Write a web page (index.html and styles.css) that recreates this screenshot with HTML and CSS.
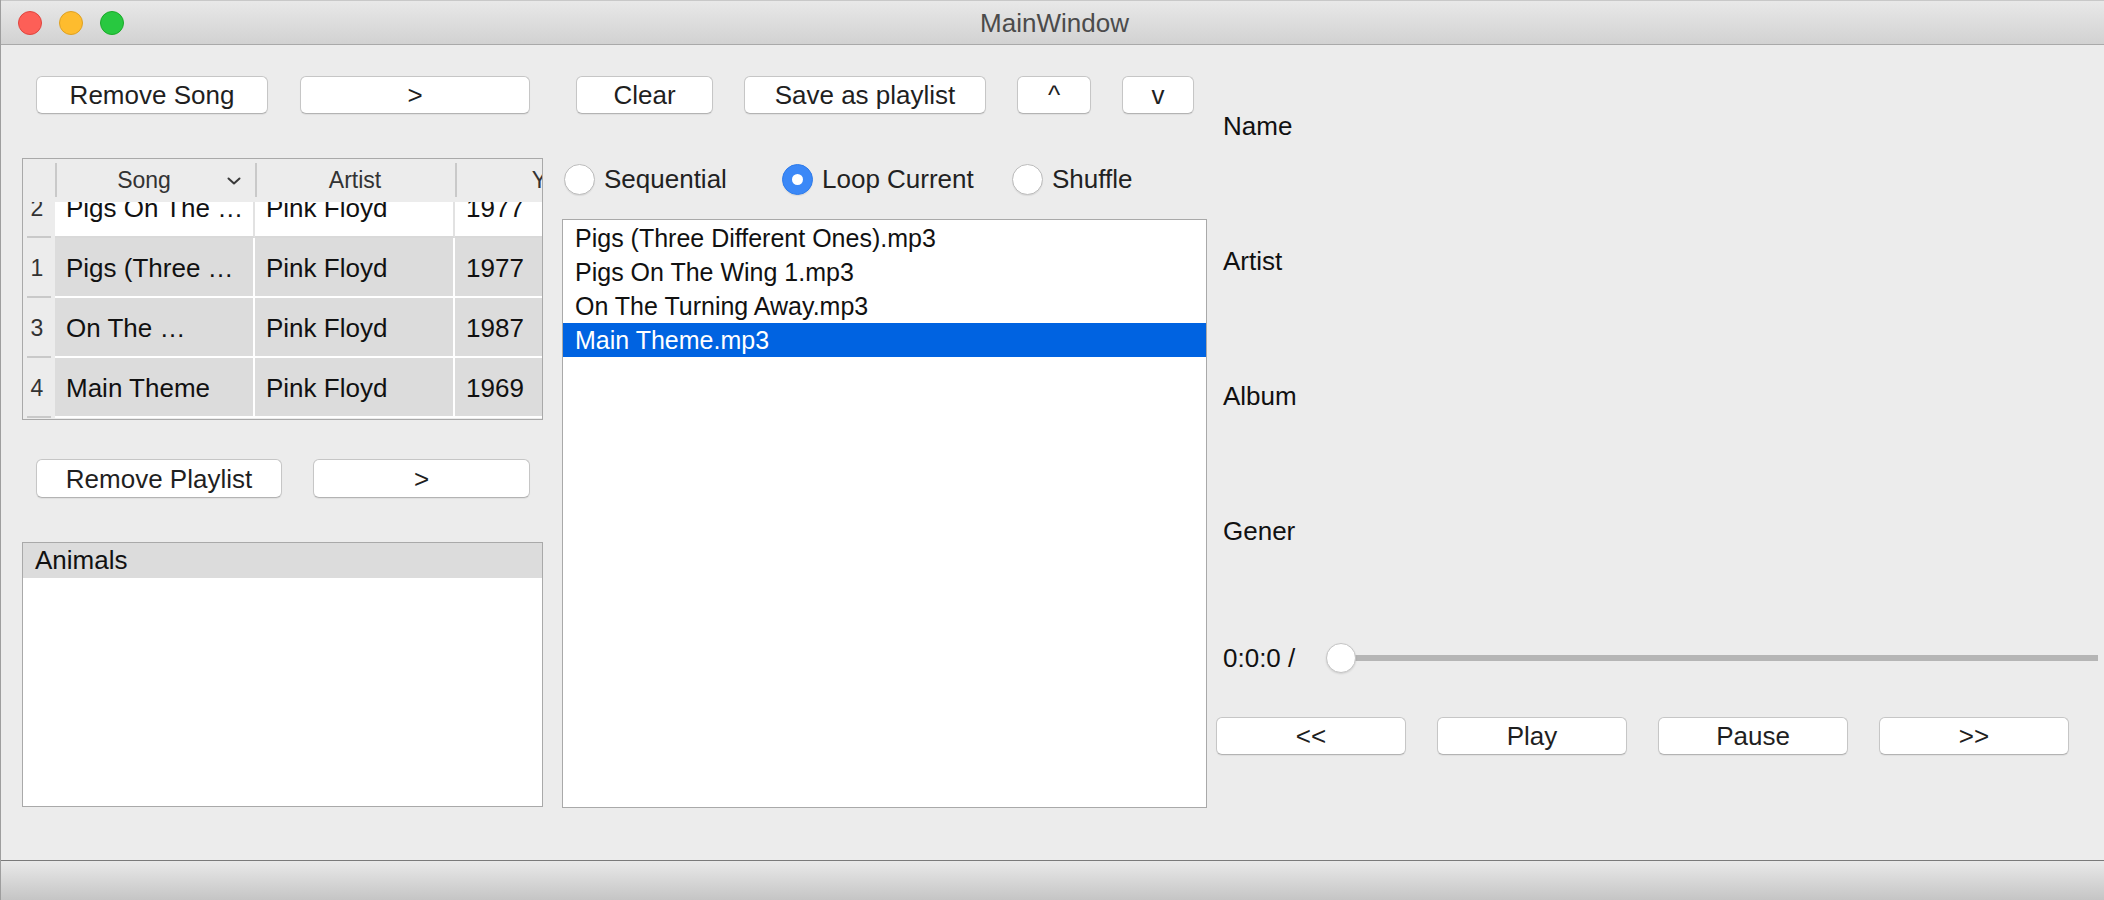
FILE: index.html
```html
<!DOCTYPE html>
<html lang="en">
<head>
<meta charset="utf-8">
<title>MainWindow</title>
<link rel="stylesheet" href="styles.css">
</head>
<body>
<div class="window">
  <header class="titlebar">
    <div class="lights">
      <span class="light red"></span>
      <span class="light yellow"></span>
      <span class="light green"></span>
    </div>
    <div class="title">MainWindow</div>
    <div class="title-spacer"></div>
  </header>

  <main class="content">
    <section class="col-left">
      <div class="btn-row top-row">
        <button class="btn w-remove-song">Remove Song</button>
        <button class="btn w-add-song">&gt;</button>
      </div>

      <div class="table">
        <div class="thead">
          <div class="th th-num"></div>
          <div class="th th-col th-song"><span class="th-label">Song</span><svg class="chev" width="14" height="8" viewBox="0 0 14 8"><polyline points="1.5,1.5 7,6.5 12.5,1.5" fill="none" stroke="#3a3a3a" stroke-width="2" stroke-linecap="round" stroke-linejoin="round"/></svg></div>
          <div class="th th-col"><span class="th-label">Artist</span></div>
          <div class="th th-col"><span class="th-label">Year</span></div>
        </div>
        <div class="tbody">
          <div class="tscroll">
            <div class="tr tr-white">
              <div class="td-num">2</div>
              <div class="td">Pigs On The …</div>
              <div class="td">Pink Floyd</div>
              <div class="td">1977</div>
            </div>
            <div class="tr">
              <div class="td-num">1</div>
              <div class="td">Pigs (Three …</div>
              <div class="td">Pink Floyd</div>
              <div class="td">1977</div>
            </div>
            <div class="tr">
              <div class="td-num">3</div>
              <div class="td">On The …</div>
              <div class="td">Pink Floyd</div>
              <div class="td">1987</div>
            </div>
            <div class="tr">
              <div class="td-num">4</div>
              <div class="td">Main Theme</div>
              <div class="td">Pink Floyd</div>
              <div class="td">1969</div>
            </div>
          </div>
        </div>
      </div>

      <div class="btn-row playlist-row">
        <button class="btn w-remove-pl">Remove Playlist</button>
        <button class="btn w-add-pl">&gt;</button>
      </div>

      <div class="listbox playlists">
        <div class="li li-inactive">Animals</div>
      </div>
    </section>

    <section class="col-mid">
      <div class="btn-row top-row">
        <button class="btn w-clear">Clear</button>
        <button class="btn w-save">Save as playlist</button>
        <button class="btn w-up">^</button>
        <button class="btn w-down">v</button>
      </div>

      <div class="radios">
        <label class="radio"><span class="radio-dot"></span><span>Sequential</span></label>
        <label class="radio"><span class="radio-dot checked"><span class="radio-inner"></span></span><span>Loop Current</span></label>
        <label class="radio"><span class="radio-dot"></span><span>Shuffle</span></label>
      </div>

      <div class="listbox queue">
        <div class="li">Pigs (Three Different Ones).mp3</div>
        <div class="li">Pigs On The Wing 1.mp3</div>
        <div class="li">On The Turning Away.mp3</div>
        <div class="li li-selected">Main Theme.mp3</div>
      </div>
    </section>

    <section class="col-right">
      <div class="info">
        <div class="info-label">Name</div>
        <div class="info-label">Artist</div>
        <div class="info-label">Album</div>
        <div class="info-label">Gener</div>
      </div>
      <div class="time-row">
        <span class="time">0:0:0 /</span>
        <div class="slider"><span class="handle"></span></div>
      </div>
      <div class="btn-row transport">
        <button class="btn w-transport">&lt;&lt;</button>
        <button class="btn w-transport">Play</button>
        <button class="btn w-transport">Pause</button>
        <button class="btn w-transport">&gt;&gt;</button>
      </div>
    </section>
  </main>

  <footer class="statusbar"></footer>
</div>
</body>
</html>
```

FILE: styles.css
```css
* { box-sizing: border-box; }

html, body {
  margin: 0;
  padding: 0;
  width: 2104px;
  height: 900px;
  overflow: hidden;
  background: #ececec;
  font-family: "Liberation Sans", Arial, Helvetica, sans-serif;
  color: #1e1e1e;
}

.window {
  width: 2104px;
  height: 900px;
  display: flex;
  flex-direction: column;
  border-left: 1px solid #9e9e9e;
  background: #ececec;
}

/* ---------- title bar ---------- */
.titlebar {
  height: 45px;
  flex: none;
  display: grid;
  grid-template-columns: 1fr auto 1fr;
  align-items: center;
  background: linear-gradient(#e8e8e8, #d2d2d2);
  border-top: 1px solid #c8c8c8;
  border-bottom: 1px solid #a9a9a9;
}
.lights {
  display: flex;
  gap: 17px;
  padding-left: 17px;
}
.light {
  width: 24px;
  height: 24px;
  border-radius: 50%;
  display: block;
}
.red { background: #fd5f57; border: 1px solid #e0443e; }
.yellow { background: #febc2e; border: 1px solid #dea123; }
.green { background: #28c840; border: 1px solid #1aab29; }
.title {
  font-size: 26px;
  color: #4b4b4b;
  padding-left: 4px;
  padding-top: 2px;
}

/* ---------- content ---------- */
.content {
  flex: 1;
  display: flex;
  min-height: 0;
}

.col-left {
  width: 521px;
  margin-left: 21px;
  padding-top: 31px;
  display: flex;
  flex-direction: column;
}
.col-mid {
  width: 645px;
  margin-left: 19px;
  padding-top: 31px;
  display: flex;
  flex-direction: column;
}
.col-right {
  flex: 1;
  margin-left: 8px;
  padding-top: 66px;
  display: flex;
  flex-direction: column;
}

/* ---------- buttons ---------- */
.btn-row {
  display: flex;
  align-items: center;
}
.top-row { padding-left: 14px; gap: 32px; height: 38px; }
.col-mid .top-row { gap: 31px; }
.playlist-row { padding-left: 14px; gap: 31px; height: 39px; margin-top: 39px; }
.transport { padding-left: 1px; gap: 31px; height: 38px; margin-top: 43px; }

.btn {
  font: inherit;
  font-size: 26px;
  color: #1f1f1f;
  height: 100%;
  background: #fff;
  border: 1px solid #c6c6c6;
  border-bottom-color: #b3b3b3;
  border-radius: 6px;
  box-shadow: 0 1px 1px rgba(0, 0, 0, 0.06);
  padding: 0;
  line-height: 1;
}
.w-remove-song { width: 232px; }
.w-add-song { width: 230px; }
.w-remove-pl { width: 246px; }
.w-add-pl { width: 217px; }
.w-clear { width: 137px; }
.w-save { width: 242px; }
.w-up { width: 74px; }
.w-down { width: 72px; }
.w-transport { width: 190px; }

/* ---------- table ---------- */
.table {
  margin-top: 44px;
  height: 262px;
  border: 1px solid #a9a9a9;
  background: #ececec;
  overflow: hidden;
  display: flex;
  flex-direction: column;
}
.thead {
  height: 43px;
  flex: none;
  display: flex;
  background: #ececec;
}
.th {
  flex: none;
  position: relative;
  font-size: 23px;
  color: #333;
  display: flex;
  align-items: center;
}
.th-num { width: 32px; }
.th-col { width: 200px; justify-content: center; }
.th-col::before {
  content: "";
  position: absolute;
  left: 0;
  top: 4px;
  bottom: 5px;
  width: 2px;
  background: #c9c9c9;
}
.th-song .th-label { flex: 1; text-align: center; padding-left: 6px; }
.chev { margin-right: 14px; flex: none; }

.tbody {
  flex: 1;
  overflow: hidden;
}
.tscroll {
  margin-top: -24px;
}
.tr {
  height: 60px;
  display: flex;
}
.td-num {
  width: 32px;
  flex: none;
  position: relative;
  background: #ececec;
  font-size: 23px;
  color: #333;
  display: flex;
  align-items: center;
  justify-content: center;
  padding-right: 4px;
}
.td-num::after {
  content: "";
  position: absolute;
  left: 4px;
  right: 4px;
  bottom: 0;
  height: 2px;
  background: #c9c9c9;
}
.td {
  width: 200px;
  flex: none;
  background: #dcdcdc;
  border-right: 2px solid #fff;
  border-bottom: 2px solid #fff;
  font-size: 26px;
  color: #111;
  padding-left: 11px;
  padding-top: 2px;
  display: flex;
  align-items: center;
  white-space: nowrap;
  overflow: hidden;
}
.tr-white .td {
  background: #fff;
  border-right-color: #e2e2e2;
  border-bottom-color: #d9d9d9;
}

/* ---------- list boxes ---------- */
.listbox {
  background: #fff;
  border: 1px solid #a9a9a9;
  padding-top: 1px;
}
.playlists {
  margin-top: 44px;
  height: 265px;
  padding-top: 0;
}
.queue {
  margin-top: 24px;
  height: 589px;
}
.li {
  height: 34px;
  line-height: 34px;
  padding-left: 12px;
  font-size: 25px;
  color: #111;
  white-space: nowrap;
}
.li-selected {
  background: #0063e1;
  color: #fff;
}
.li-inactive {
  background: #dcdcdc;
  height: 35px;
  line-height: 35px;
  font-size: 26px;
}

/* ---------- radios ---------- */
.radios {
  margin-top: 49px;
  height: 32px;
  display: grid;
  grid-template-columns: 218px 230px auto;
  padding-left: 2px;
}
.radio {
  display: flex;
  align-items: center;
  gap: 9px;
  font-size: 26px;
  color: #222;
}
.radio-dot {
  width: 31px;
  height: 31px;
  flex: none;
  border-radius: 50%;
  background: #fff;
  border: 1px solid #bcbcbc;
  box-shadow: 0 1px 1px rgba(0, 0, 0, 0.08);
  display: flex;
  align-items: center;
  justify-content: center;
}
.radio-dot.checked {
  background: #3b88f7;
  border-color: #2f7ceb;
}
.radio-inner {
  width: 11px;
  height: 11px;
  border-radius: 50%;
  background: #fff;
}

/* ---------- right panel ---------- */
.info {
  display: flex;
  flex-direction: column;
  gap: 105px;
  padding-left: 8px;
}
.info-label {
  font-size: 26px;
  line-height: 30px;
  color: #111;
}
.time-row {
  margin-top: 96px;
  height: 32px;
  display: flex;
  align-items: center;
  gap: 31px;
  padding-left: 8px;
  padding-right: 6px;
}
.time {
  font-size: 26px;
  color: #111;
  white-space: nowrap;
}
.slider {
  flex: 1;
  height: 31px;
  display: flex;
  align-items: center;
  background-image: linear-gradient(#b5b5b5, #b5b5b5);
  background-repeat: no-repeat;
  background-size: calc(100% - 15px) 6px;
  background-position: 15px center;
  border-radius: 3px;
}
.handle {
  width: 30px;
  height: 30px;
  border-radius: 50%;
  background: #fff;
  border: 1px solid #c4c4c4;
  box-shadow: 0 1px 2px rgba(0, 0, 0, 0.12);
}

/* ---------- status bar ---------- */
.statusbar {
  height: 40px;
  flex: none;
  border-top: 1px solid #7a7a7a;
  background: linear-gradient(#e9e9e9, #c5c5c5);
}
```
